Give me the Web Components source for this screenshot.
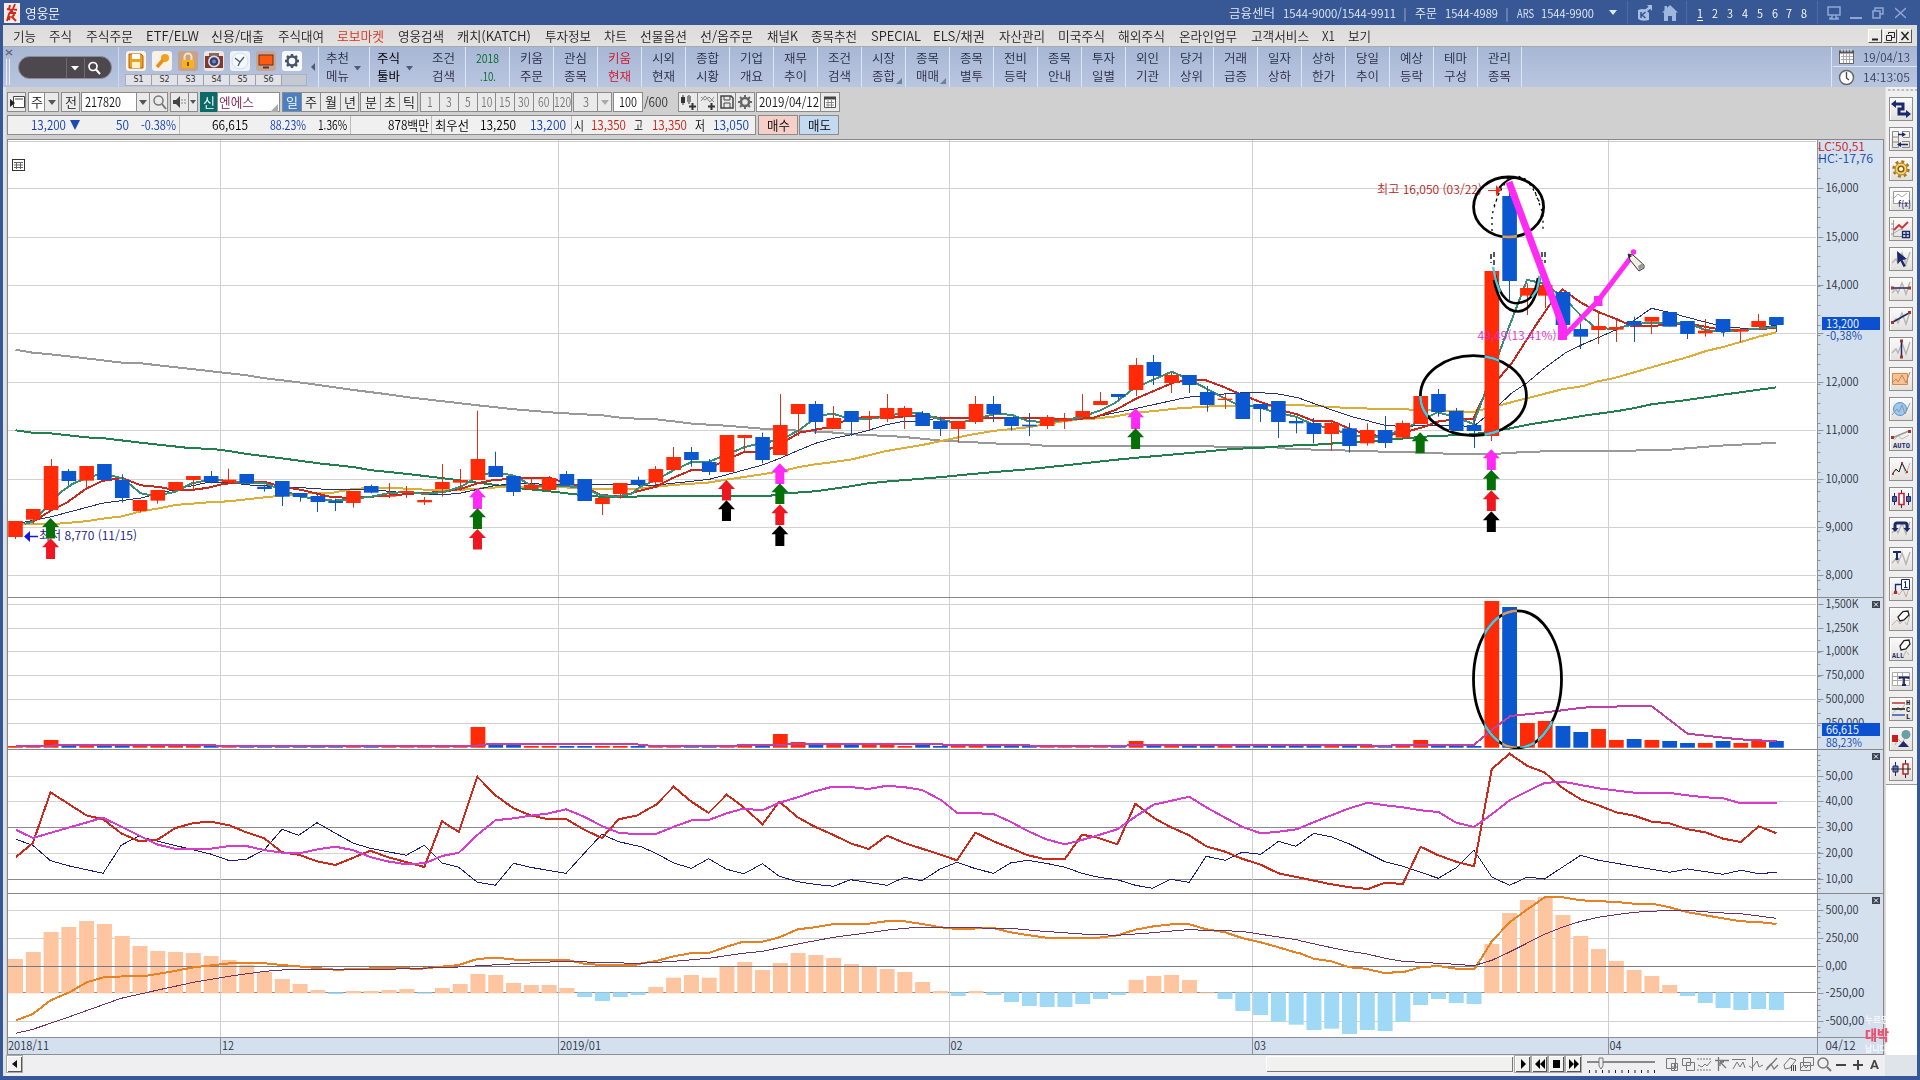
<!DOCTYPE html>
<html lang="ko">
<head>
<meta charset="utf-8">
<title>영웅문</title>
<style>
html,body{margin:0;padding:0;width:1920px;height:1080px;overflow:hidden;background:#385795}
body{font:350 12px/14px "Noto Sans CJK KR","Liberation Sans",sans-serif;color:#222}
</style>
</head>
<body>
<hero-app></hero-app>
<script>
const make = (tag, css, build) => customElements.define(tag, class extends HTMLElement {
  connectedCallback() {
    if (this.shadowRoot) return;
    const root = this.attachShadow({mode: 'open'});
    root.innerHTML = `<style>${css}</style>${build(this)}`;
  }
});

/* Text squeezed or stretched to an exact advance width. */
customElements.define('fit-text', class extends HTMLElement {
  connectedCallback() {
    if (this.shadowRoot) return;
    const root = this.attachShadow({mode: 'open'});
    const w = +this.getAttribute('w');
    root.innerHTML = `<style>:host{display:block;flex:none;width:${w}px;white-space:pre;height:14px;line-height:14px}
      span{display:inline-block;transform-origin:0 50%}</style><span><slot></slot></span>`;
    const s = root.querySelector('span');
    const n = s.getBoundingClientRect().width;
    if (n) s.style.transform = `scaleX(${w / n})`;
  }
});
/* Lay [x, width, html, style] items along a flex row, starting at x0. */
const row = (items, x0) => {
  let end = x0;
  return items.map(([x, w, h, st = '']) => {
    const m = x - end; end = x + w;
    return `<div style="flex:none;margin-left:${m}px;width:${w}px;${st}">${h}</div>`;
  }).join('');
};
const T = (x, w, t, st) => [x, w, `<fit-text w="${w}">${t}</fit-text>`, st];
const tri = (c = '#445', s = 4) => `<svg width="${s*2}" height="${s+1}" style="display:block"><path d="M0 0H${s*2}L${s} ${s+1}Z" fill="${c}"/></svg>`;

/* ---------- title ---------- */
make('title-bar', `:host{display:flex;height:25px;background:#385795;color:#e4ebf8;align-items:center}
  svg{display:block}`, () => row([
  [4,16,`<svg width="16" height="20"><rect width="16" height="20" fill="#f6ece8"/><path d="M6 2L5 6M3 6L8 7L5 11L3 18M11 1L9 6L13 7M8 8L10 12L8 14L12 18M5 10L12 10M6 13L5 17" stroke="#d0281c" stroke-width="1.900" fill="none"/></svg>`],
  T(25,35,'영웅문','color:#fff;font-size:13px'),
  T(1229,46,'금융센터'), T(1283,113,'1544-9000/1544-9911'), T(1404,2,'|'), T(1415,22,'주문'), T(1445,53,'1544-4989'),
  T(1506,2,'|'), T(1517,17,'ARS'), T(1541,53,'1544-9900'),
  [1609,8,tri('#dfe8f8')],[1627,1,'','height:23px;background:#4a6aa8'],
  [1637,16,`<svg width="16" height="16"><path d="M1 5Q6 3 9 5L12 8V15Q5 17 1 14Z" fill="#a9bde2"/><path d="M4 7V13M8.500 7L5 10L8.500 13" stroke="#385795" stroke-width="1.600" fill="none"/><path d="M8 6L13 2.500" stroke="#a9bde2" stroke-width="2.500"/><path d="M10 0H15V6Z" fill="#a9bde2"/></svg>`],
  [1662,16,`<svg width="16" height="16"><path d="M8 0L16 7.500H14V16H10V11H6V16H2V7.500H0ZM2.500 1H5V4L2.500 6Z" fill="#9fb6df"/></svg>`],
  [1686,1,'','height:23px;background:#4a6aa8'],
  ...[1,2,3,4,5,6,7,8].map((n,i)=>[Math.round(1697+i*14.9),6,`<fit-text w="6">${n}</fit-text>`, 'color:#fff;'+(n===1?'box-shadow:0 1px #fff':'')]),
  [1817,1,'','height:23px;background:#4a6aa8'],
  [1827,14,`<svg width="14" height="14" fill="none" stroke="#8fa8d8" stroke-width="1.5"><path d="M1 1H13V9H1ZM5 9V12H3V13H11V12H9V9"/></svg>`],
  [1850,12,`<svg width="12" height="14"><path d="M0 12H12" stroke="#8fa8d8" stroke-width="2"/></svg>`],
  [1872,12,`<svg width="12" height="12" fill="none" stroke="#8fa8d8" stroke-width="1.5"><path d="M3 4V1H11V7H8M1 4H8V11H1Z"/></svg>`],
  [1895,11,`<svg width="11" height="12"><path d="M0 1L11 11M11 1L0 11" stroke="#8fa8d8" stroke-width="1.3"/></svg>`]
], 0));

/* ---------- menu ---------- */
make('menu-bar', `:host{display:flex;height:22px;align-items:center;background:linear-gradient(#dcdcdc,#e4e2e0);border-bottom:1px solid #aaa;box-sizing:border-box;color:#222;font-size:13px}`, () => {
  const m = [[13,23,'기능'],[49,23,'주식'],[86,47,'주식주문'],[146,53,'ETF/ELW'],[211,53,'신용/대출'],[278,46,'주식대여'],[337,47,'로보마켓'],[398,46,'영웅검색'],[457,74,'캐치(KATCH)'],[545,46,'투자정보'],[604,23,'차트'],[640,47,'선물옵션'],[700,53,'선/옵주문'],[767,31,'채널K'],[811,46,'종목추천'],[871,50,'SPECIAL'],[933,52,'ELS/채권'],[999,46,'자산관리'],[1058,47,'미국주식'],[1118,47,'해외주식'],[1179,58,'온라인업무'],[1251,58,'고객서비스'],[1322,13,'X1'],[1348,23,'보기']];
  const b = 'height:14px;background:#ecebe6;border:1px solid;border-color:#fff #555 #555 #fff;box-sizing:border-box';
  return row([...m.map(([x,w,t])=>T(x,w,t,t==='로보마켓'?'color:#d8301c':'')),
    [1868,14,`<svg width="12" height="12" style="display:block"><path d="M3 9.500H9" stroke="#222" stroke-width="2"/></svg>`,b],
    [1883,14,`<svg width="12" height="12" style="display:block" fill="none" stroke="#222"><path d="M4.500 4V2.500H10.500V7.500H8M2.500 5.500H7.500V10.500H2.500Z"/></svg>`,b],
    [1898,14,`<svg width="12" height="12" style="display:block"><path d="M2.500 2L9.500 10M9.500 2L2.500 10" stroke="#222" stroke-width="1.500"/></svg>`,b]], 3);
});

/* ---------- toolbar ---------- */
make('tool-cell', `:host{display:flex;flex:none;box-sizing:border-box;border-left:1px solid #dce6f5;height:40px;position:relative}
  .t{display:flex;flex-direction:column;gap:4px;padding-top:4px;width:100%;align-items:center}
  .a{position:absolute;right:8px;top:19px}.c{position:absolute;right:3px;bottom:3px}`, el => {
  const [a,b] = el.getAttribute('t').split('/');
  const arrow = el.hasAttribute('arrow');
  return `<div class="t" style="${arrow?'padding-right:8px;margin-right:6px':''}"><fit-text w="23">${a}</fit-text><fit-text w="${b==='.10.'?16:23}">${b}</fit-text></div>`
   + (arrow?`<div class="a">${tri('#4a5a80',3.5)}</div>`:'') + (el.hasAttribute('corner')?`<svg class="c" width="6" height="6"><path d="M6 0V6H0Z" fill="#70809f"/></svg>`:'');
});
make('quick-icons', `:host{display:block;width:183px;flex:none}.r{display:flex;gap:6px;padding:4px 0 3px 1px}.b{width:20px;height:20px;border-radius:3px}
  .l{display:flex;width:182px;height:12px;background:#c5c9d2;font:400 8px/10px "DejaVu Sans",sans-serif;color:#333;border:1px solid #a9afbe;box-sizing:border-box}
  .l i{font-style:normal;width:25px;text-align:center;background:#e2e3e6;border-right:1px solid #9aa0b0}svg{display:block}`, () => {
  const ic = [
   ['#fdf3e2','<path d="M3 3H15L17 5V17H3Z" fill="#f0a020" stroke="#a86010"/><rect x="6" y="3" width="8" height="5" fill="#fff"/><rect x="6" y="11" width="8" height="6" fill="#fff3cf"/>'],
   ['#f6f1ea','<circle cx="13" cy="7" r="4" fill="#f2a21c"/><path d="M11 9L5 16" stroke="#e8901a" stroke-width="3.500"/>'],
   ['#c9a287','<path d="M6.500 9V6A3.500 3.500 0 0 1 13.500 6V9" fill="none" stroke="#f4e6b8" stroke-width="2"/><rect x="4" y="9" width="12" height="8" fill="#f7b318"/><rect x="9" y="11" width="2" height="4" fill="#7a4a08"/>'],
   ['#efe6e2','<rect x="1" y="5" width="18" height="12" fill="#7c3a30"/><rect x="5" y="2" width="10" height="3" fill="#8a6a60"/><circle cx="10" cy="10.500" r="6" fill="#ddd"/><circle cx="10" cy="10.500" r="4.300" fill="#35406e"/><circle cx="10" cy="10.500" r="2" fill="#6a86c8"/>'],
   ['#eef3f8','<circle cx="10" cy="10" r="8" fill="#f4f8fb" stroke="#d5dfe8"/><path d="M5 7L10 11L14 6M10 11L8 15" stroke="#4c5a68" stroke-width="1.300" fill="none"/>'],
   ['#c8a595','<rect x="3" y="4" width="14" height="10" fill="#ff5a10" stroke="#5c3222"/><path d="M7 16.500H13" stroke="#5c3222" stroke-width="2"/>'],
   ['#f7f9fb','<circle cx="10" cy="10" r="4.500" fill="none" stroke="#44566e" stroke-width="2.500"/><path d="M10 3V5M10 15V17M3 10H5M15 10H17M5 5L6.500 6.500M15 15L13.500 13.500M15 5L13.500 6.500M5 15L6.500 13.500" stroke="#44566e" stroke-width="2.500"/>']];
  return `<div class="r">${ic.map(([c,s])=>`<div class="b" style="background:${c}"><svg width="20" height="20">${s}</svg></div>`).join('')}</div><div class="l">${[1,2,3,4,5,6].map(n=>`<i>S${n}</i>`).join('')}</div>`;
});
make('tool-bar', `:host{display:flex;height:40px;background:linear-gradient(#a8b7d5,#b9c6e0);color:#242c42;align-items:flex-start}
  .pill{box-sizing:border-box;width:94px;height:23px;margin-top:9px;border-radius:12px;background:#4c484d;border:1px solid #8c8c92;display:flex;align-items:center;color:#fff}
  .date{color:#38425c}.date div{display:flex;align-items:center}`, () => row([
  [4,12,`<svg width="12" height="40" style="display:block"><path d="M2 3L8 8M8 3L2 8" stroke="#667" stroke-width="1.500"/><path d="M2.500 12V38M5.500 12V38" stroke="#eef" /></svg>`],
  [18,94,`<div class="pill"><svg width="92" height="22"><path d="M47.500 1V21M65.500 1V21" stroke="#6e6a70"/><path d="M52 9H60L56 13.500Z" fill="#fff"/><circle cx="74" cy="9.500" r="4" fill="none" stroke="#fff" stroke-width="1.700"/><path d="M77 12.500L81 17" stroke="#fff" stroke-width="2"/></svg></div>`],
  [118,1,'','height:40px;background:#cdd8ea'],
  [125,183,'<quick-icons></quick-icons>'],
  [310,6,`<svg width="6" height="40" style="display:block"><path d="M5 16V24L1 20Z" fill="#4a5a80"/></svg>`],
  [318,51,'<tool-cell t="추천/메뉴" arrow></tool-cell>'],
  [369,52,'<tool-cell t="주식/툴바" arrow style="color:#000;font-weight:400"></tool-cell>'],
  ...['조건/검색','2018/.10.','키움/주문','관심/종목','키움/현재','시외/현재','종합/시황','기업/개요','재무/추이','조건/검색','시장/종합','종목/매매','종목/별투','전비/등락','종목/안내','투자/일별','외인/기관','당거/상위','거래/급증','일자/상하','상하/한가','당일/추이','예상/등락','테마/구성','관리/종목'].map((t,i)=>[421+i*44,44,
    `<tool-cell t="${t}" ${i===10||i===11?'corner':''} style="${i===0?'border-left:0;':''}${i===1?'color:#006a28':i===4?'color:#d01020':''}"></tool-cell>`]),
  [1521,1,'','height:40px;background:#dce6f5'],
  [1831,1,'','height:40px;background:#dce6f5'],
  [1833,84,`<div class="date"><div style="height:20px;border-bottom:1px solid #dce6f5;box-sizing:border-box"><svg width="30" height="19"><rect x="6.500" y="4.500" width="14" height="12" fill="#fff" stroke="#666"/><path d="M6 5H21" stroke="#555" stroke-width="3"/><path d="M8 9.500H20M8 12.500H20M10.500 7V16M13.500 7V16M16.500 7V16" stroke="#aaa"/><path d="M9 2V5M12 2V5M15 2V5M18 2V5" stroke="#eee"/></svg><fit-text w="47">19/04/13</fit-text></div>
    <div style="height:20px"><svg width="30" height="19"><circle cx="13.500" cy="9.500" r="7" fill="#fff" stroke="#666" stroke-width="1.500"/><path d="M13.500 4V10L16 12" stroke="#444" fill="none" stroke-width="1.300"/></svg><fit-text w="47">14:13:05</fit-text></div></div>`]
], 3));

/* ---------- chart controls ---------- */
make('ctl-box', `:host{display:flex;box-sizing:border-box;height:20px;border:1px solid #8b8b8b;background:#eaeaea;align-items:center;justify-content:center;color:#111}`, () => '<slot></slot>');
const G = {
 panel:'<path d="M5.500 3.500H16.500V14.500H5.500Z" fill="#fff" stroke="#444"/><path d="M7 6H15" stroke="#444"/><path d="M2 6L7 10L2 14Z" fill="#222"/>',
 mag:'<circle cx="8.500" cy="7.500" r="4.500" fill="none" stroke="#777" stroke-width="1.500"/><path d="M12 11L16 16" stroke="#777" stroke-width="2"/>',
 spk:'<path d="M2 7H5L9 3V15L5 11H2Z" fill="#444"/><path d="M11 6V12M14 6V12" stroke="#888" stroke-dasharray="2 1"/>',
 cand:'<path d="M4 2V12M10 2V11" stroke="#333"/><rect x="2" y="4" width="4" height="6" fill="#333"/><rect x="8" y="3" width="4" height="6" fill="#888"/><path d="M13.500 10V17M10 13.500H17" stroke="#333" stroke-width="2"/>',
 wav:'<path d="M2 8L6 3L11 9L15 4M2 4L6 7L10 4L15 9" stroke="#888" fill="none"/><path d="M12.500 10V17M9 13.500H16" stroke="#333" stroke-width="2"/>',
 save:'<path d="M3 3H13L15 5V15H3Z" fill="none" stroke="#444" stroke-width="1.500"/><path d="M6 3V7H12V3M6 15V10H12V15" stroke="#444" fill="none"/>',
 gear:'<circle cx="9" cy="9" r="4" fill="none" stroke="#666" stroke-width="2.500"/><path d="M9 2V5M9 13V16M2 9H5M13 9H16M4 4L6 6M12 12L14 14M14 4L12 6M6 12L4 14" stroke="#666" stroke-width="2"/>',
 cal:'<path d="M3.500 4.500H14.500V14.500H3.500Z" fill="#fff" stroke="#555"/><path d="M3 5H15" stroke="#444" stroke-width="3"/><path d="M5 9.500H13M5 12H13M7 7V14M10.500 7V14" stroke="#888"/>'};
const g = k => `<svg width="18" height="18" style="display:block">${G[k]}</svg>`;
make('chart-controls', `:host{display:flex;height:20px;padding-top:5px;background:#d0d0d0;font-size:13px}`, () => {
  const B = (x,x2,h,st='') => [x,x2-x,`<ctl-box style="${st}">${h}</ctl-box>`];
  const F = (w,t) => `<fit-text w="${w}">${t}</fit-text>`;
  const gr='color:#777', wh='background:#fff';
  return row([B(7,26,g('panel')),B(28,45,F(12,'주'),wh),B(44,59,tri('#555')),B(61,80,F(12,'전')),
   B(81,137,`<div style="margin-right:12px">${F(36,'217820')}</div>`,wh),B(136,150,tri('#555')),B(149,168,g('mag')),B(170,189,g('spk')),B(188,198,tri('#555',3)),
   B(200,217,F(12,'신'),'background:#0c6b68;color:#fff;border-color:#0c6b68'),
   B(217,280,`<div style="width:59px;display:flex;align-items:flex-end;justify-content:space-between">${F(35,'엔에스')}<svg width="8" height="8" style="margin-bottom:-3px"><path d="M8 0V8H0Z" fill="#aaa"/></svg></div>`,'background:#fff;color:#7a1040'),
   ...[[282,302,'일'],[301,321,'주'],[320,341,'월'],[340,359,'년'],[360,381,'분'],[380,400,'초'],[399,418,'틱']].map(([a,b,t],i)=>B(a,b,F(12,t),i===0?'background:#4a7fc4;color:#fff':'')),
   ...[[420,440,'1'],[439,459,'3'],[458,478,'5'],[477,496,'10'],[495,515,'15'],[514,534,'30'],[533,554,'60'],[553,572,'120']].map(([a,b,t])=>B(a,b,F(t.length*5.7,t),gr)),
   B(573,598,F(6,'3'),gr),B(597,612,tri('#aaa')),B(613,643,F(18,'100'),wh),[644,24,F(24,'/600'),'padding-top:3px;color:#333'],
   B(678,698,g('cand')),B(697,718,g('wav')),B(717,736,g('save')),B(735,755,g('gear')),B(756,821,F(60,'2019/04/12'),wh),B(820,840,g('cal'))],6);
});
make('quote-row', `:host{display:flex;height:20px;padding:3px 0 4px 1px;background:#d0d0d0;font-size:13px;color:#000}
  .q{display:flex;width:749px;height:20px;box-sizing:border-box;border:1px solid #8b8b8b;background:#f0f0f1;align-items:center}
  .b{height:18px;width:38px;border:1px solid #8b8b8b;display:flex;align-items:center;justify-content:center;margin-left:2px}.b+.b{margin-left:1px}`, () => {
  const b='color:#0c3cac', r='color:#c81c0c', S=x=>[x,1,'','height:18px;background:#bbb'];
  return `<div class="q">${row([T(31,35,'13,200',b),[70,10,`<svg width="10" height="10" style="display:block"><path d="M0 0H10L5 10Z" fill="#1c49b4"/></svg>`],
   T(116,13,'50',b),T(141,35,'-0.38%',b),S(179),T(212,36,'66,615'),T(270,36,'88.23%',b),T(318,29,'1.36%'),S(350),T(388,41,'878백만'),S(431),T(435,34,'최우선'),T(480,36,'13,250'),T(530,36,'13,200',b),S(571),
   T(574,10,'시'),T(591,35,'13,350',r),T(634,9,'고'),T(652,35,'13,350',r),T(695,10,'저'),T(713,36,'13,050',b)],8)}</div>
   <div class="b" style="background:#f6cfc9">${'<fit-text w="23">매수</fit-text>'}</div><div class="b" style="background:#c4d9f2">${'<fit-text w="23">매도</fit-text>'}</div>`;
});

/* ---------- chart data ---------- */
const STEP = 17.787, X = i => 15.5 + STEP * i;
/* colour, body top, body bottom, high, low; in thirds of a pixel under y=320 */
const C1 = `R603,651,603,657 R567,599,567,612 R438,570,417,570 B453,483,447,495 R438,482,438,505 B432,480,432,480 B480,534,463,548 R540,573,540,578 R510,542,510,551 R486,510,486,512 R468,480,468,510 B468,486,453,490 R479,487,446,487 B462,490,462,490 B500,507,494,515 B483,530,483,558 B519,531,519,545 B528,546,520,576 B543,549,536,573 R513,549,513,563 B498,518,494,520 R525,530,489,534 R513,518,498,534 R540,547,531,555 R486,507,432,530 R480,488,447,513 R417,480,272,480 B438,471,395,471 B468,516,468,528 R494,507,474,507 R474,510,468,516 B462,497,453,497 B477,543,477,543 R534,552,534,585 R489,522,489,536 B480,495,470,495 R447,487,438,495 R411,450,381,450 B396,420,381,440 B426,456,417,465 R345,456,345,456 R345,354,345,393 B351,420,338,430 R315,405,222,405 R252,282,252,348 B252,306,243,342 R294,327,258,327 B273,306,273,348 R288,294,273,330 R264,297,222,306 R264,288,258,327 B279,318,273,318 B303,327,290,348 R303,327,303,368 R252,306,228,312 B252,282,228,306 B291,318,291,332 B314,319,279,348 R291,318,285,327 R297,304,279,327 R273,291,222,291 R243,255,216,255 B222,231,222,240 R135,210,114,228 B126,168,105,195 R165,189,159,219 B165,195,165,219 B216,255,198,275 R236,240,222,267 B219,297,219,297 B252,267,252,306 B243,306,243,354`.split(' ').map(s=>[s[0],...s.slice(1).split(',').map(v=>320+v/3)]);
/* the same, under y=150 */
const C2 = `B813,820,803,850 B819,852,804,880 R819,852,812,903 B835,888,819,908 R840,880,820,887 B840,879,798,894 R819,863,812,863 R738,822,738,822 B732,786,717,800 B783,843,774,843 B825,843,810,894 R363,858,363,873 B138,393,110,450 R414,437,400,495 R405,437,400,474 B426,525,426,525 B537,560,520,597 R528,540,486,582 R531,539,510,576 B513,526,500,576 R501,515,501,552 B486,530,486,530 B513,552,513,567 R542,550,507,560 B507,546,507,560 R538,545,536,577 R513,531,492,531 B501,525,501,546`.split(' ').map(s=>[s[0],...s.slice(1).split(',').map(v=>150+v/3)]);
const C = [...C1, ...C2];
const RED='#ff2a08', BLU='#0a57d0';
/* A series is cut in tiles; each tile has its own origin and horizontal factor. */
const line = (tiles, col, w) => {
  const p = [];
  tiles.forEach(([ox,oy,sx,s]) => s.trim().split(/\s+/).forEach(q=>{const [x,y]=q.split(',').map(Number);p.push((ox+x/sx).toFixed(1)+','+(oy+y/3).toFixed(1));}));
  return `<polyline points="${p.join(' ')}" fill="none" stroke="${col}" stroke-width="${w}" shape-rendering="crispEdges"/>`;
};
const P3 = (a,b,c,col,w)=>line([[0,320,2.45,a],[640,320,2.45,b],[1280,150,2.8,c]],col,w);
const Q3 = (a,b,c,col,w)=>line([[0,720,2.3758,a],[640,720,2.3758,b],[1300,740,2.529,c]],col,w);
const W = 1877;
const hl = (ys,c='#d2d2d2')=>ys.map(y=>`<path d="M7 ${Math.floor(y)+.5}H1816" stroke="${c}"/>`).join('');
const vl = (y0,y1)=>[220,558,949,1252,1608].map(x=>`<path d="M${x}.5 ${y0}V${y1}" stroke="#cfcfd2"/>`).join('');
const tx = (x,y,w,t,c='#2c323e',st='')=>`<text x="${x}" y="${y+4.5}" textLength="${w}" lengthAdjust="spacingAndGlyphs" fill="${c}" style="${st}">${t}</text>`;
const axis = (y0,y1,lab,minor)=>{
  let s=`<rect x="1818" y="${y0}" width="65" height="${y1-y0}" fill="#d5e0ee"/><path d="M1817.500 ${y0}V${y1}" stroke="#8d949e"/>`;
  const st=(lab[1][0]-lab[0][0])/minor;
  for(let y=lab[0][0]-10*st;y<y1;y+=st) if(y>y0+2) s+=`<path d="M1817.500 ${Math.floor(y)+.5}h3" stroke="#8d949e"/>`;
  return s+lab.map(([y,t])=>`<path d="M1817.500 ${Math.floor(y)+.5}h6" stroke="#8d949e"/>`+tx(1825.5,y-1,t.replace(/[,]/g,'').length*5.8+(t.includes(',')?4:0),t)).join('');
};
const xbtn = y=>`<rect x="1872" y="${y}" width="8" height="7" fill="#3c4350"/><path d="M1874 ${y+1.5}l4 4m0 -4l-4 4" stroke="#fff"/>`;
const arrow = (i,y,c)=>{const x=X(i)-.5;return `<path d="M${x} ${y}l8.500 9h-4v11.600h-9v-11.600h-4z" fill="${c}"/>`;};
const ell = (cx,cy,rx,ry,id)=>[0,1,2].map(k=>`<ellipse cx="${cx}" cy="${cy}" rx="${rx}" ry="${ry}" fill="none" stroke="${['#000','#58c4d8','#c8a070'][k]}" stroke-width="2.800" ${k?`clip-path="url(#${id}${k})"`:''}/>`).join('');
const mk = '#ff2af4';

const price = () => {
  let s = hl([188,237,285,333,382,430,479,527,575])+vl(139,597);
  s += '<path d="M7 141.500H1816" stroke="#ccc"/>';
  s += P3('38,89 80,98 123,103 210,115 300,128 345,130 540,157 605,166 650,175 740,188 860,209 950,223 1000,232 1080,243 1170,256 1260,268 1370,279 1475,286 1520,293 1560,296','0,296 40,298 130,311 210,317 300,326 390,332 480,338 520,343 640,350 740,362 820,367 880,371 950,373 1000,378 1390,378 1420,381 1560,382','0,895 100,899 200,902 290,905 400,908 490,912 600,912 650,908 740,904 940,903 1090,899 1140,895 1230,887 1390,878','#999',2);
  s += P3('38,331 80,338 123,340 210,352 255,355 345,368 470,385 515,386 560,393 605,402 690,415 780,430 870,442 905,450 1000,462 1080,474 1170,488 1215,495 1260,503 1340,513 1430,526 1470,530 1560,530','0,527 320,527 345,521 430,514 475,506 520,498 560,490 600,485 740,471 840,459 950,448 1050,435 1160,420 1210,414 1300,404 1400,393 1450,387 1560,381','0,888 100,884 195,877 300,870 400,860 540,853 640,836 700,823 790,808 850,797 940,784 990,775 1040,763 1140,750 1240,734 1390,712','#23804e',2);
  s += P3('38,611 130,612 165,609 215,603 250,596 300,589 345,574 385,566 430,555 510,547 560,544 640,533 690,527 740,521 815,518 865,507 905,504 950,503 1010,507 1060,510 1120,510 1170,506 1220,502 1370,501 1420,505 1510,507 1560,507','0,505 80,495 165,488 210,479 300,463 345,454 390,441 430,433 470,427 520,418 600,394 700,373 780,352 820,342 870,332 950,322 1060,299 1110,296 1160,290 1210,279 1260,273 1310,266 1380,260 1450,257 1550,258','0,763 100,768 190,774 330,778 440,780 540,786 600,770 680,748 790,718 850,708 890,694 940,683 1040,652 1140,622 1190,604 1240,591 1300,573 1340,560 1390,547','#dcae38',2);
  s += P3('38,612 123,591 250,550 345,534 430,508 510,487 550,487 620,496 740,503 810,509 870,510 910,508 960,515 1080,525 1130,519 1170,508 1215,496 1300,490 1350,495 1560,493','0,497 40,495 80,490 125,484 170,478 210,465 255,450 300,435 345,414 390,390 430,370 470,356 515,345 560,331 600,315 640,305 690,303 740,292 1000,297 1090,297 1150,282 1210,267 1280,248 1340,232 1430,222 1500,217 1560,221','0,733 50,743 130,774 195,798 245,812 290,825 343,830 400,826 490,826 541,830 575,800 613,765 650,728 690,700 740,655 800,608 850,582 940,540 980,520 1040,475 1085,486 1140,502 1240,530 1300,535 1340,535 1390,525','#26336c',1);
  s += P3('80,606 123,573 165,547 210,507 250,483 300,474 345,496 390,501 430,510 470,510 510,503 550,491 600,488 650,486 690,500 740,510 780,522 815,532 860,533 910,530 960,526 1040,518 1080,517 1130,506 1170,490 1210,480 1260,476 1300,473 1345,473 1380,486 1430,500 1470,524 1520,530','0,512 40,500 80,474 125,451 165,448 210,420 255,396 300,396 345,372 390,338 430,329 470,320 510,297 560,290 600,291 690,288 740,294 820,294 950,294 1060,297 1110,294 1165,270 1215,236 1260,212 1310,186 1345,182 1385,180 1430,201 1470,222 1520,246 1560,262','0,780 45,792 95,813 145,813 190,834 245,855 293,858 343,848 400,832 440,815 490,808 541,807 570,740 613,685 650,638 720,520 755,465 791,418 841,457 891,486 942,507 985,528 1040,528 1140,520 1190,530 1240,540 1340,538 1390,533','#c8291c',2);
  s += P3('60,612 80,605 100,580 150,515 180,490 210,475 250,460 300,475 345,520 380,528 430,515 470,490 510,480 560,482 600,490 650,490 690,510 740,530 780,538 820,542 865,536 910,530 950,520 1000,515 1040,522 1090,515 1130,500 1170,470 1210,455 1260,467 1300,495 1340,500 1380,497 1430,505 1470,525 1510,530 1550,520','0,500 40,480 80,452 125,427 165,427 210,405 255,382 300,368 345,360 390,330 440,285 475,282 510,295 560,297 600,290 640,280 690,280 740,300 780,310 820,297 870,282 910,284 950,303 990,306 1040,300 1080,292 1130,270 1165,248 1210,205 1260,178 1303,155 1345,178 1385,204 1430,234 1460,252 1520,262 1560,280','0,790 45,800 95,825 145,835 195,855 245,862 293,858 343,838 400,810 440,787 490,800 541,822 570,740 613,610 692,389 741,402 791,440 841,495 880,530 930,538 990,523 1040,518 1140,518 1190,540 1240,545 1300,540 1390,530','#3d8c78',2);
  const bars = c0 => C.map(([c,a,b],i)=>c===c0?`<rect x="${X(i)-7.3}" y="${a}" width="14.600" height="${b-a}"/>`:'').join('');
  C.forEach(([c,a,b,h,l],i)=>{const x=X(i),xw=Math.floor(x)+.5,k=c==='R'?RED:BLU;s+=`<path d="M${xw} ${h}V${l}" stroke="${c==='R'?'#d8341c':'#1452b4'}" stroke-width="1"/><rect x="${x-7.3}" y="${a}" width="14.600" height="${b-a}" fill="${k}"/>`;});
  s += `<clipPath id="a1">${bars('R')}</clipPath><clipPath id="a2">${bars('B')}</clipPath>`;
  s += tx(39,535.5,98,'최저 8,770 (11/15)','#101080')+'<path d="M29 536.500H38" stroke="#1018e0" stroke-width="1.500"/><path d="M24 536.500L30 531V542Z" fill="#1018e0"/>';
  s += tx(1377,189,105,'최고 16,050 (03/22)','#b82018')+'<path d="M1488 190.500H1497" stroke="#ff2010"/><path d="M1500.500 190.500L1496 185V196Z" fill="#ff2010"/>';
  const m=mk,gn='#067008',r='#ee1620',k='#000';
  s += [[2,518,gn],[2,538.3,r],[26,488.3,m],[26,508.3,gn],[26,529,r],[40,480,r],[40,500.3,k],[43,463.3,m],[43,483.3,gn],[43,504.3,r],[43,525.3,k],[63,408.3,m],[63,428.3,gn],[79,432.3,gn],[83,449.3,m],[83,469.7,gn],[83,490.3,r],[83,511.3,k]].map(a=>arrow(...a)).join('');
  s += ell(1508.6,207,35,30,'a')+ell(1473.4,395.7,53,40,'a');
  s += `<g fill="none" stroke="#000" stroke-width="1.300"><path d="M1492 231V215L1498 195L1507 180M1494 206L1502 186Q1516 168 1532 187L1541 205M1507 179Q1520 171 1533 186L1543 214V232" stroke-dasharray="2 4"/><path d="M1491 254V263M1494 252V266M1542 252V261M1545 252V263" stroke-dasharray="5 3"/><path d="M1499 188Q1512 173 1523 180" stroke-width="2"/></g>
   <g fill="none" stroke="#000" stroke-width="2.600"><path d="M1495 275C1500 301 1512 304 1518 303C1528 302 1535 297 1538 278"/><path d="M1494 280Q1500 311 1518 311.500Q1535 311 1540 276"/></g><g fill="none" stroke="#58c4d8" stroke-width="2.400"><path d="M1493 267L1496 281L1500 292M1540 276L1537 290L1532 297"/></g>`;
  s += tx(1477.500,335,79,'49,49(13,41%)','#e030c8');
  s += `<g stroke="${mk}" fill="none"><path d="M1509 182L1563.500 328" stroke-width="7"/><path d="M1564 336L1597 302L1632 256" stroke-width="5"/></g><rect x="1558" y="325" width="9" height="15" fill="${mk}"/><rect x="1594" y="296" width="8.500" height="10" fill="${mk}"/><circle cx="1633.500" cy="252" r="2.800" fill="${mk}"/>`;
  s += `<path d="M1628 254l5 1 11 10v3l-5 3 -9 -11z" fill="#f1eee4" stroke="#333"/><path d="M1638 266l5 -3 1 4 -5 3z" fill="#999"/><path d="M1628 254l1 4 3 -2z" fill="#222"/>`;
  s += '<rect x="12.500" y="159.500" width="12" height="11" fill="#fff" stroke="#333"/><path d="M14 162.500H23M14 165H23M14 167.500H23M16.500 162V169M20.500 162V169" stroke="#666"/>';
  s += axis(139,597,[[188,'16,000'],[237,'15,000'],[285,'14,000'],[382,'12,000'],[430,'11,000'],[479,'10,000'],[527,'9,000'],[575,'8,000']],5);
  s += '<path d="M1817.500 333.500h6" stroke="#8d949e"/>'+tx(1818,146,47,'LC:50,51','#c81818')+tx(1818,158,55,'HC:-17,76','#0c48a8');
  s += '<rect x="1822" y="317" width="58" height="13" fill="#0a50d0"/>'+tx(1826,323,33,'13,200','#fff')+tx(1826,335,36,'-0,38%','#0c48a8');
  return s+'<path d="M7 139.500H1884" stroke="#888" stroke-width="1"/>';
};
const volume = () => {
  let s = hl([604,628,651,675,699,723])+vl(597,749);
  const top={2:740,26:727,24:745,27:745,28:745,43:734,44:742,45:745,46:745,47:745,48:745,49:745,51:745,63:741,79:740,83:601,84:607,85:723,86:721,87:726,88:732,89:729,90:740,91:739,92:740,93:741,94:743,95:743,96:741,97:743,98:741,99:741};
  let b1='',b2='';
  C.forEach(([c],i)=>{const t=top[i]||746,q=`<rect x="${X(i)-7.4}" y="${t}" width="14.800" height="${747.7-t}" fill="${c==='R'?RED:BLU}"/>`;s+=q;if(i>82){if(c==='R')b1+=q;else b2+=q;}});
  s+=line([[0,720,2.3758,'38,78 120,77 160,74 440,74 500,75 525,78 1050,78 1130,77 1170,71 1510,71'],[640,720,2.3758,'0,75 40,78 310,76 390,71 712,72 725,75 920,75 930,77 1150,77 1180,75 1560,75'],[1300,580,2.529,'0,494 150,494 200,498 280,494 440,494 485,450 532,408 600,400 655,392 715,383 760,380 845,379 888,377 980,461 1110,478 1205,484']],'#c040a4',2);
  s+=`<clipPath id="b1">${b1}</clipPath><clipPath id="b2">${b2}</clipPath>`+ell(1517.5,679.3,44,68.500,'b');
  s+=axis(597,749,[[604,'1,500K'],[628.3,'1,250K'],[651.6,'1,000K'],[675.6,'750,000'],[699.6,'500,000'],[723.6,'250,000']],2);
  s+='<rect x="1822" y="723" width="58" height="13" fill="#0a50d0"/>'+tx(1826,729.5,33,'66,615','#fff')+tx(1826,742,36,'88,23%','#0c48a8')+xbtn(601);
  return s+'<path d="M7 597.500H1884" stroke="#888"/>';
};
const dmi = () => {
  let s = hl([776,801,853])+hl([827,879],'#8c8890')+vl(749,893);
  s+=Q3('38,358 78,376 120,422 165,438 245,460 288,376 328,349 460,390 500,402 545,422 585,418 628,389 670,328 710,346 753,308 797,340 840,370 880,385 965,406 1008,376 1050,429 1090,442 1134,487 1177,496 1220,430 1260,442 1345,460 1388,400 1430,343 1470,365 1515,378','0,379 38,400 80,429 122,445 163,416 206,448 247,461 291,431 331,469 375,485 415,493 460,499 500,479 587,496 628,472 670,482 712,448 753,427 797,446 840,460 880,429 920,421 965,430 1010,442 1050,460 1090,472 1134,479 1177,496 1218,505 1260,478 1305,487 1345,409 1390,421 1430,397 1475,403 1517,364 1558,379','0,310 35,280 80,291 125,312 215,365 260,379 350,415 395,383 440,331 485,411 530,436 575,411 618,417 710,346 755,361 800,370 935,397 980,387 1070,403 1115,391 1160,401 1205,397','#1c1e72',1);
  s+=Q3('38,411 78,369 120,217 205,286 245,298 288,340 328,362 372,361 415,325 460,309 500,305 545,316 585,337 628,355 670,397 710,404 753,424 797,435 880,392 920,411 965,426 1008,441 1050,304 1090,336 1134,170 1177,226 1220,265 1260,286 1300,297 1345,297 1388,329 1430,354 1470,298 1515,286','0,281 38,254 80,200 120,243 163,279 206,224 245,260 291,313 331,245 375,292 415,320 460,345 500,370 543,387 587,347 630,370 700,398 753,421 797,338 840,364 880,384 920,405 960,417 1010,416 1050,344 1085,352 1134,373 1177,251 1220,293 1260,321 1305,346 1345,379 1390,395 1430,416 1475,434 1517,460 1560,471','0,413 75,432 125,442 172,447 215,428 260,432 305,320 350,346 395,365 440,379 485,87 530,41 575,78 618,97 665,145 710,178 755,196 800,217 845,227 890,245 935,250 980,268 1025,277 1070,296 1115,306 1160,259 1205,280','#cc2a1a',2);
  s+=Q3('38,329 78,354 245,293 372,373 415,386 500,386 545,378 585,378 630,391 675,399 715,399 755,388 797,380 840,391 880,411 920,424 960,432 1010,430 1050,408 1090,398 1134,345 1177,301 1220,295 1260,287 1300,281 1345,268 1388,290 1430,318 1470,338 1515,343','0,342 38,342 80,320 125,300 163,300 206,280 245,266 291,271 331,248 375,232 415,214 455,201 500,201 543,207 587,197 630,202 670,210 715,240 753,278 800,280 840,282 880,305 920,332 965,358 1010,373 1050,360 1090,345 1134,328 1177,290 1220,254 1260,243 1305,230 1345,262 1390,293 1430,320 1475,340 1517,335 1560,328','0,264 40,244 125,205 172,188 215,196 260,202 305,211 350,216 395,248 440,261 485,223 530,181 575,154 618,129 665,125 710,135 755,145 845,158 935,159 980,166 1025,172 1070,175 1110,188 1205,188','#d83cca',2);
  s+=axis(749,893,[[776,'50,00'],[801.6,'40,00'],[827.6,'30,00'],[853.6,'20,00'],[879.6,'10,00']],5)+xbtn(753);
  return s+'<path d="M7 749.500H1884" stroke="#888"/>';
};
const HIST=[717,696,636,621,603,612,648,678,693,696,699,708,720,735,756,777,792,810,822,813,813,810,807,821,804,792,762,765,789,795,795,804,831,843,831,825,801,773,765,773,741,726,750,729,699,705,714,732,741,747,756,786,813,828,813,825,846,858,861,861,852,837,825,780,768,765,780,817,837,873,885,905,914,930,926,942,930,933,906,855,837,849,852,672,579,540,531,585,648,687,723,750,768,795,828,849,864,870,867,870];
const macd = () => {
  let s = hl([910,938,1021])+hl([992],'#8c8890')+vl(893,1037);
  HIST.forEach((v,i)=>{const a=Math.min(v,817),b=Math.max(v,820);s+=`<rect x="${X(i)-7.5}" y="${720+a/3}" width="15" height="${(b-a)/3}" fill="${v<819?'#fdc5a0':'#9fd9f5'}"/>`;});
  s+=hl([966],'#7c7880');
  s+=Q3('38,901 78,882 120,841 165,817 206,787 248,771 350,767 415,753 460,742 545,730 630,730 670,735 753,744 797,749 840,748 900,744 1000,746 1090,735 1134,717 1177,713 1225,719 1345,719 1388,731 1430,735 1510,735','0,731 38,723 80,709 120,700 165,698 206,680 245,665 291,665 331,652 375,628 415,622 460,612 543,611 590,603 628,604 670,612 715,622 753,627 840,624 880,637 920,645 965,653 1090,653 1134,646 1177,629 1220,619 1270,612 1303,612 1345,628 1390,637 1430,654 1475,667 1517,682 1560,698','0,640 35,656 80,664 125,682 165,686 210,698 260,697 305,682 350,678 395,686 442,686 485,604 530,547 575,508 620,471 660,471 710,481 800,486 845,491 890,491 935,502 980,517 1115,544 1160,546 1205,552','#e88024',2);
  s+=Q3('38,940 78,928 120,910 165,890 288,835 372,811 460,787 560,766 630,754 690,748 797,749 920,748 1090,741 1180,734 1340,724 1450,728 1515,730','0,730 80,724 163,715 245,700 291,694 375,672 460,652 520,642 590,630 655,622 880,625 950,633 1060,643 1134,646 1200,640 1300,629 1430,634 1475,643 1560,659','0,602 80,623 125,634 170,642 215,655 260,664 395,673 440,677 485,661 530,636 620,582 665,561 710,544 755,532 800,524 845,517 935,511 980,511 1040,517 1120,522 1205,535','#6a3464',1);
  s+=axis(893,1037,[[910.5,'500,00'],[938.3,'250,00'],[966.3,'0,00'],[993,'-250,00'],[1021.3,'-500,00']],5)+xbtn(897);
  return s+'<path d="M7 893.500H1884" stroke="#888"/>';
};
const dates = () => `<rect x="7" y="1037" width="1877" height="18" fill="#d5e0ee"/><path d="M7 1037.500H1884M7 1054.500H1884" stroke="#8a8f98"/>`
  +[220,558,949,1252,1608,1817].map(x=>`<path d="M${x}.5 1037V1055" stroke="#8a8f98"/>`).join('')
  +tx(8,1045,41,'2018/11')+tx(222,1045,12,'12')+tx(560,1045,41,'2019/01')+tx(950.500,1045,12,'02')+tx(1254,1045,12,'03')+tx(1609.500,1045,12,'04')+tx(1825.500,1045,30,'04/12');
const KINDS = {price:[139,597,price],volume:[597,749,volume],dmi:[749,893,dmi],macd:[893,1037,macd],dates:[1037,1055,dates]};
make('chart-panel', `:host{display:block;background:#fff}svg{display:block;font:350 12px "Noto Sans CJK KR","Liberation Sans",sans-serif}`, el => {
  const [a,b,f] = KINDS[el.getAttribute('kind')];
  return `<svg width="${W}" height="${b-a}" viewBox="7 ${a} ${W} ${b-a}">${f()}<path d="M7.500 ${a}V${b}M1883.500 ${a}V${b}" stroke="#888"/></svg>`;
});

/* ---------- bottom strip ---------- */
make('bottom-bar', `:host{display:flex;box-sizing:border-box;height:21px;padding-bottom:3px;background:#efeff1;align-items:center;color:#222}svg{display:block}`, () => {
  const bt='height:16px;background:#f2f2f0;box-shadow:inset 1px 1px #fff,inset -1px -1px #555,0 0 0 1px #aaa';
  const I=(x,p)=>[x-8,16,`<svg width="16" height="16" fill="none" stroke="#777">${p}</svg>`];
  return row([
  [7,15,`<svg width="15" height="16"><path d="M10 4V12L5 8Z" fill="#111"/></svg>`,bt],
  [1266,247,'','height:16px;background:#f1f1f0;box-shadow:inset 1px 1px #fff,inset -1px -1px #777'],
  [1515,15,`<svg width="15" height="16"><path d="M6 3V13L11 8Z" fill="#000"/></svg>`,bt],
  [1531.5,15,`<svg width="15" height="16"><path d="M8 3V13L3 8ZM13 3V13L8 8Z" fill="#000"/></svg>`,bt],
  [1548.5,15,`<svg width="15" height="16"><rect x="4" y="4" width="7" height="8" fill="#000"/></svg>`,bt],
  [1565.5,15,`<svg width="15" height="16"><path d="M3 3V13L8 8ZM8 3V13L13 8Z" fill="#000"/></svg>`,bt],
  [1587,69,`<svg width="69" height="18"><path d="M0 7H68" stroke="#888" stroke-width="2"/><path d="M2.500 15v3m6.500 -3v3m6.500 -3v3m6.500 -3v3m6.500 -3v3m6.500 -3v3m6.500 -3v3m6.500 -3v3m6.500 -3v3m6.500 -3v3m6.500 -3v3" stroke="#222"/><path d="M12 3H16V11L14 14L12 11Z" fill="#eee" stroke="#777"/></svg>`],
  I(1670.5,'<path d="M3.500 2.500H12.500V12.500H3.500ZM8.500 7.500H14.500V14.500H8.500ZM11.500 8V14M9 11H14" fill="#eee"/>'),
  I(1687.5,'<path d="M2.500 2.500H10.500V9.500H2.500ZM6.500 6.500H14.500V14.500H6.500Z" fill="#eee"/>'),
  I(1704,'<path d="M1 3H15M1 14H15" stroke-dasharray="2 1"/><path d="M2 9L6 11L9 8L11 10L15 5"/>'),
  I(1722,'<path d="M1 4.500H15M4.500 1V15M6 6L12 12M6 6V10M6 6H10" stroke-width="1.300"/>'),
  I(1738.5,'<path d="M1 3.500H15M2 13L6 6L9 11L12 6L14 12"/>'),
  I(1755.5,'<path d="M4.500 1V15M1 10L4 12L9 5L11 11L15 9"/>'),
  I(1772,'<path d="M2 14L13 2M3 12L7 8L10 13L14 9" stroke-width="1.300"/>'),
  I(1790,'<path d="M2 9L8 2L14 4L8 12L3 13Z"/><path d="M9.500 9V15M11.500 9V15M13.500 9V15" stroke="#444"/>'),
  I(1806.5,'<path d="M4.500 1.500H14.500V9.500H4.500ZM1.500 6.500H11.500V14.500H1.500Z" fill="#eee"/><path d="M2 12L5 9L7 12L10 9"/>'),
  I(1824,'<circle cx="7" cy="7" r="5" stroke-width="1.500"/><path d="M11 11L15 15" stroke-width="2"/>'),
  I(1840.5,'<path d="M3 9H13" stroke="#444" stroke-width="2"/>'),
  I(1858,'<path d="M3 9H13M8 4V14" stroke="#444" stroke-width="2"/>'),
  [1870,10,'<fit-text w="9">A</fit-text>','font:700 13px Roboto,sans-serif;color:#444;padding-top:1px']],6);
});

/* ---------- side tools ---------- */
make('side-tools', `:host{display:block;width:31px;height:968px;background:#fff;border-left:1px solid #ddd;box-sizing:content-box}
  .p{height:698px;background:#f0f0f0;border-bottom:1px solid #999;box-sizing:border-box;display:flex;flex-direction:column;gap:6px;padding:10px 0 0 3px;background-image:radial-gradient(circle,#b8b8b8 1px,transparent 1.2px);background-size:4.500px 4px;background-repeat:repeat-x;background-position:1px 1px}
  .b{width:24px;height:24px;flex:none;box-sizing:border-box;border:1px solid #8e8e8e;background:linear-gradient(#fbfbfa,#e2e0dc);box-shadow:inset 1px 1px #fff}
  svg{display:block;margin:-1px}text{font:700 8px "Liberation Mono",monospace}`, () => {
  const w='<path d="M3 16L7 12L9 16L13 6L17 17L21 5" fill="none" stroke="#b8b4b0" stroke-width="1.400"/>', N='#1c2a6c';
  const ic=[
   `<path d="M5 7H14V12H10V17H19" fill="none" stroke="${N}" stroke-width="3"/><path d="M2 7L7 3V11ZM22 17L17 13V21Z" fill="${N}"/>`,
   `<path d="M3.500 4.500H9.500V20.500H3.500ZM4 10H9M4 15H9M13 4.500H20.500V10.500H14M13 14.500H20.500V20.500H13" fill="none" stroke="#888"/><path d="M9 7.500H14M19 17.500H12" stroke="${N}" stroke-width="1.500"/><path d="M13 5L17 7.500L13 10ZM12 15L8 17.500L12 20Z" fill="${N}"/>`,
   `<circle cx="12" cy="12" r="7.500" fill="none" stroke="#a87820" stroke-width="2.500" stroke-dasharray="3 2.900"/><circle cx="12" cy="12" r="6" fill="#f6d460" stroke="#a87820"/><circle cx="12" cy="12" r="2.800" fill="#fff" stroke="#8a5c10" stroke-width="1.500"/>`,
   `<path d="M4.500 4.500H20.500V16.500H4.500Z" fill="#fff" stroke="#999"/><path d="M5 11L9 7L13 10L18 6" stroke="#aaa" fill="none"/><text x="9" y="20" textLength="13" lengthAdjust="spacingAndGlyphs" fill="${N}" style="font-size:9px">f(x)</text>`,
   `<path d="M4.500 3V19.500H14M2 7H5M2 12H5M2 17H5" stroke="#999" fill="none"/><path d="M5 13L10 8L13 11L19 5" stroke="#d03038" stroke-width="1.800" fill="none"/><path d="M5 16L10 13L14 12" stroke="#aaa" fill="none"/><path d="M13.500 14.500H20.500V20.500H13.500ZM17 14V20M13 17.500H20" fill="#fff" stroke="${N}" stroke-width="1.300"/>`,
   w+`<path d="M8 4L18 12L13.500 13L17 19L14.500 20L11.500 14L8.500 17Z" fill="${N}"/>`,
   w+`<path d="M4 11H20" stroke="${N}" stroke-width="1.500"/><path d="M2 9.500h3v3H2zM19 9.500h3v3H19z" fill="#b03028"/>`,
   w+`<path d="M4 15L20 6" stroke="${N}" stroke-width="1.500"/><path d="M2 14h3v3H2zM19 4h3v3H19z" fill="#b03028"/>`,
   w+`<path d="M12.500 4V20" stroke="${N}" stroke-width="1.500"/><path d="M11 2.500h3v3H11zM11 18.500h3v3H11z" fill="#b03028"/>`,
   `<path d="M3.500 6.500H18.500V17.500H3.500Z" fill="#fbc090" stroke="#d88848"/><path d="M3 16L7 12L9 15L13 8L17 16L21 5" fill="none" stroke="#b88860"/>`,
   `<circle cx="11" cy="12" r="6.500" fill="#9cc8f0" stroke="#5a90c8"/><path d="M3 18L8 12L10 15L13 8L16 17L21 6" fill="none" stroke="#8a9aa8"/>`,
   `<path d="M3 11L20 4" stroke="#999" stroke-width="1.500"/><path d="M5 13L9 9L13 12L20 8" stroke="#bbb" fill="none"/><path d="M2 9h3v3H2zM19 3h3v3H19z" fill="#b03028"/><text x="4" y="21" textLength="17" lengthAdjust="spacingAndGlyphs" fill="${N}">AUTO</text>`,
   `<path d="M3 17L7 13L10 15L13 6L17 17L21 6" fill="none" stroke="#b8b4b0"/><path d="M4 16L7 12L10 15L13 6L17 14" fill="none" stroke="#222"/><path d="M3 16h2v2H3zM12 5h2v2h-2zM17 14h2v2h-2z" fill="#d03038"/>`,
   `<path d="M5.500 6V18M19.500 6V18M12.500 3V21" stroke="${N}"/><path d="M3.500 9.500H7.500V14.500H3.500ZM17.500 9.500H21.500V14.500H17.500Z" fill="#4a60b0" stroke="${N}"/><path d="M10 6.500H15V17.500H10Z" fill="#fff" stroke="#d02030" stroke-width="1.600"/>`,
   w+`<path d="M6 12V8Q6 6 8 6H16Q18 6 18 8V12" fill="none" stroke="${N}" stroke-width="3"/><path d="M2.500 11H9.500L6 15ZM14.500 11H21.500L18 15Z" fill="${N}"/>`,
   w+`<path d="M4 5H12M8 5V12M6.500 12H9.500" stroke="${N}" stroke-width="2"/>`,
   `<path d="M3 18L7 13L10 18L14 12L17 20L21 8" fill="none" stroke="#c8a8a0"/><path d="M6.500 15V7.500H13" stroke="${N}" fill="none" stroke-width="1.300"/><path d="M12.500 2.500H20.500V12.500H12.500Z" fill="#fff" stroke="${N}"/><path d="M15 5.500L16.500 4.500V10.500M15 10.500H18.500" stroke="${N}" fill="none"/><path d="M5 14h3v3H5z" fill="#b03028"/>`,
   `<path d="M3 18L8 13L11 17L16 11M16 15L18 18L21 8" fill="none" stroke="#b8b4b0"/><path d="M9 10L14 4.500L19 4L20 8L15 13L11 14Z" fill="#fff" stroke="#222" stroke-width="1.300"/>`,
   `<path d="M11 9L15 3.500L20 3L21 7L17 12L12 13Z" fill="#fff" stroke="#222" stroke-width="1.300"/><path d="M14 20L17 14L20 18" fill="none" stroke="#b8b4b0"/><text x="3" y="21" textLength="12" lengthAdjust="spacingAndGlyphs" fill="${N}">ALL</text>`,
   `<path d="M3.500 5.500H20.500V18.500H3.500ZM3 9.500H20M3 13.500H20M8.500 5V18M13.500 5V18" fill="#fff" stroke="#aaa"/><path d="M10.500 12V10.500H19.500V12M15 10V18M13 18H17" fill="none" stroke="${N}" stroke-width="1.800"/>`,
   `<path d="M4 16L9 10L12 14L16 7" fill="none" stroke="#bbb"/><path d="M3 6H16" stroke="#c03030" stroke-width="1.500"/><path d="M3 12H16" stroke="#111" stroke-width="1.500"/><path d="M3 18H16" stroke="#2858b0" stroke-width="1.500"/><text x="17" y="8" fill="#111" style="font-size:7px">H</text><text x="17" y="15" fill="#111" style="font-size:7px">C</text><text x="17" y="22" fill="#111" style="font-size:7px">L</text>`,
   `<path d="M6 18L9 12L13 16L18 8" fill="none" stroke="#c8a8a0"/><rect x="3" y="8" width="6" height="7" fill="#c81e20"/><circle cx="17" cy="7.500" r="4.500" fill="#68a0a4"/><path d="M14.500 14L20 20H9Z" fill="${N}"/>`,
   `<path d="M6.500 5V19M16.500 3V21" stroke="${N}"/><path d="M4 9H9V15H4Z" fill="#6880c0" stroke="${N}"/><path d="M14 7H19V17H14Z" fill="#fff" stroke="#c02020" stroke-width="1.500"/><path d="M2 12H12M12 12H22" stroke="#222"/>`];
  return `<div class="p">${ic.map(s=>`<div class="b"><svg width="24" height="24">${s}</svg></div>`).join('')}</div>`;
});

make('chart-window', `:host{display:block;width:1879px;background:#d0d0d0}.c{margin-left:1px;width:1877px}`, () =>
  `<chart-controls></chart-controls><quote-row></quote-row><div class="c">${Object.keys(KINDS).map(k=>`<chart-panel kind="${k}"></chart-panel>`).join('')}</div><bottom-bar></bottom-bar>`);
make('water-mark', `:host{position:absolute;left:1865px;top:1013px;width:30px;font:700 10px/13px "Noto Sans CJK KR",sans-serif;color:rgba(255,255,255,.75);white-space:nowrap}
  b{display:block;font-weight:900;color:#ee5070;height:15px}`, () => `<fit-text w="24" style="font-size:9px">누르면</fit-text><b><fit-text w="24" style="font-size:14px">대박</fit-text></b><fit-text w="22" style="font-size:9px">납니다</fit-text>`);
make('hero-app', `:host{display:block;width:1920px;height:1080px;background:#385795;position:relative;overflow:hidden}
  .body{box-sizing:border-box;width:1914px;margin-left:3px;background:#dfe3ea}
  .m{display:flex;padding-left:3px;height:989px}`, () =>
  `<title-bar></title-bar><div class="body"><menu-bar></menu-bar><tool-bar></tool-bar><div class="m"><chart-window></chart-window><side-tools></side-tools></div></div><water-mark></water-mark>`);
</script>
</body>
</html>
